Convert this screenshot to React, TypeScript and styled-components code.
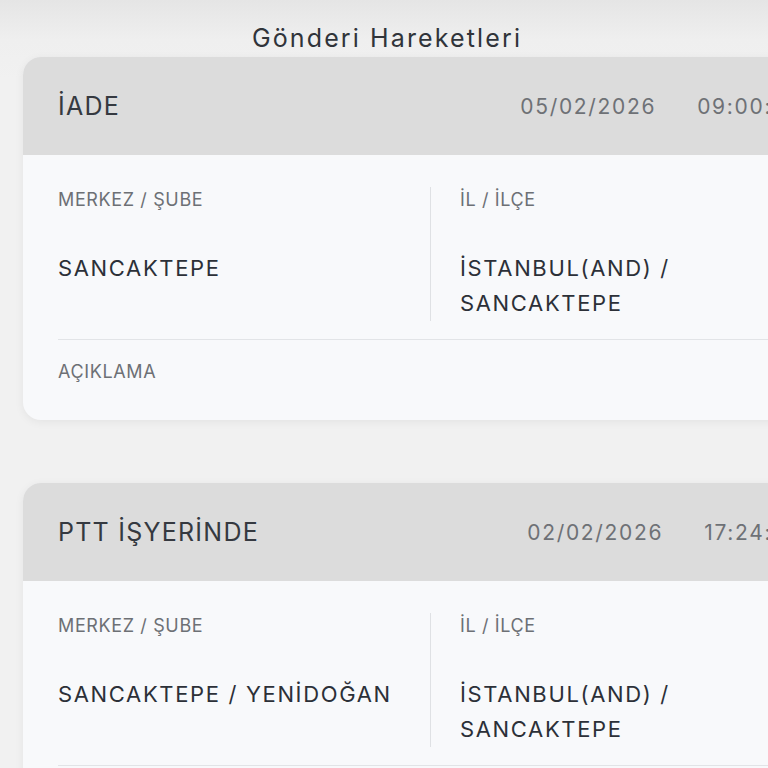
import React from "react";
import styled, { createGlobalStyle } from "styled-components";

const GlobalStyle = createGlobalStyle`
  html, body {
    margin: 0;
    padding: 0;
    background: #f1f1f1;
    overflow: hidden;
  }
  body {
    font-family: Inter, "Noto Sans", "Liberation Sans", sans-serif;
  }
`;

type Movement = {
  status: string;
  date: string;
  time: string;
  branch: string;
  city: string[];
};

const movements: Movement[] = [
  {
    status: "İADE",
    date: "05/02/2026",
    time: "09:00:00",
    branch: "SANCAKTEPE",
    city: ["İSTANBUL(AND) /", "SANCAKTEPE"],
  },
  {
    status: "PTT İŞYERİNDE",
    date: "02/02/2026",
    time: "17:24:00",
    branch: "SANCAKTEPE / YENİDOĞAN",
    city: ["İSTANBUL(AND) /", "SANCAKTEPE"],
  },
];

const Page = styled.div`
  min-height: 768px;
  width: 900px;
  padding: 23px 0 0 23px;
  box-sizing: border-box;
  background: linear-gradient(#e5e5e5 0px, #efefef 40px, #f1f1f1 80px);
`;

const Title = styled.h1`
  margin: 0;
  width: 728px;
  text-align: center;
  font-size: 25px;
  font-weight: 400;
  line-height: 30px;
  letter-spacing: 0.085em;
  color: #30343a;
`;

const List = styled.div`
  display: flex;
  flex-direction: column;
  gap: 63px;
  margin-top: 4px;
`;

const Card = styled.section`
  width: 814px;
  border-radius: 18px;
  overflow: hidden;
  background: #f8f9fb;
  box-shadow: 0 2px 10px rgba(0, 0, 0, 0.06);
`;

const Header = styled.header`
  height: 98px;
  padding: 0 35px;
  display: flex;
  align-items: center;
  background: #dcdcdc;
`;

const Status = styled.div`
  flex: 1;
  font-size: 25px;
  font-weight: 400;
  letter-spacing: 0.05em;
  color: #353940;
`;

const Stamp = styled.div`
  display: flex;
  gap: 41px;
  font-size: 21px;
  letter-spacing: 0.08em;
  color: #6e7176;
`;

const Body = styled.div`
  padding: 0 35px;
`;

const Fields = styled.div`
  display: grid;
  grid-template-columns: 372px 1fr;
  padding: 32px 0 18px;
  border-bottom: 1px solid #e2e4e7;
`;

const Field = styled.div<{ $divided?: boolean }>`
  padding-left: ${(p) => (p.$divided ? "29px" : "0")};
  border-left: ${(p) => (p.$divided ? "1px solid #dfe1e4" : "none")};
`;

const Label = styled.div`
  font-size: 18px;
  line-height: 26px;
  letter-spacing: 0.035em;
  color: #6d7075;
`;

const Value = styled.div`
  margin-top: 38px;
  font-size: 22px;
  line-height: 35px;
  letter-spacing: 0.075em;
  color: #2c3038;
`;

const Note = styled.div`
  padding: 19px 0 35px;
`;

const App = () => (
  <>
    <GlobalStyle />
    <Page>
      <Title>Gönderi Hareketleri</Title>
      <List>
        {movements.map((m) => (
          <Card key={m.date + m.status}>
            <Header>
              <Status>{m.status}</Status>
              <Stamp>
                <span>{m.date}</span>
                <span>{m.time}</span>
              </Stamp>
            </Header>
            <Body>
              <Fields>
                <Field>
                  <Label>MERKEZ / ŞUBE</Label>
                  <Value>{m.branch}</Value>
                </Field>
                <Field $divided>
                  <Label>İL / İLÇE</Label>
                  <Value>
                    {m.city.map((line) => (
                      <div key={line}>{line}</div>
                    ))}
                  </Value>
                </Field>
              </Fields>
              <Note>
                <Label>AÇIKLAMA</Label>
              </Note>
            </Body>
          </Card>
        ))}
      </List>
    </Page>
  </>
);

export default App;
